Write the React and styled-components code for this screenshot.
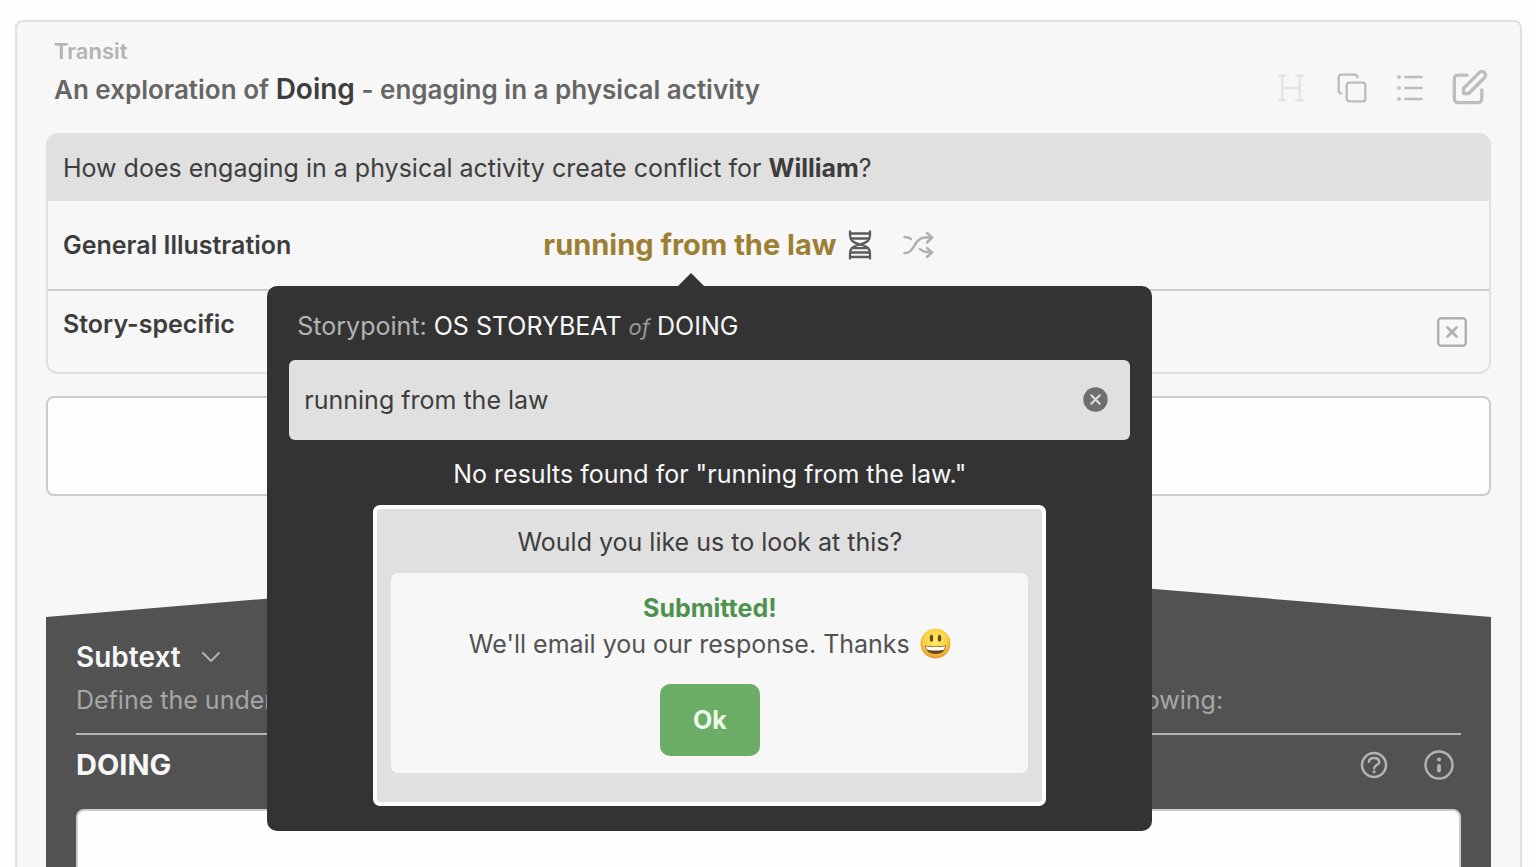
import { useState } from "react";
import styled, { createGlobalStyle, css } from "styled-components";
import { Copy, ChevronDown } from "lucide-react";
import { TbHeading } from "react-icons/tb";
import { HiOutlinePencilAlt } from "react-icons/hi";

const ListIcon = () => (
  <svg width="31" height="26" viewBox="-5 0 31 26" aria-hidden="true">
    <g stroke="currentColor" strokeWidth="2.6" strokeLinecap="round">
      <path d="M8.5 2h16M8.5 13h16M8.5 24h16" />
      <path d="M1.8 2h.4M1.8 13h.4M1.8 24h.4" strokeWidth="3.4" />
    </g>
  </svg>
);

const HourglassIcon = () => (
  <svg width="24" height="30" viewBox="0 0 24 30" fill="none" aria-hidden="true">
    <g stroke="currentColor" strokeWidth="2.3" strokeLinecap="round">
      <path d="M2 1.500V5C2 10 4.500 12.500 12 14.500C20 16.500 22 18.500 22 24V28.500" />
      <path d="M22 1.500V5C22 10 19.500 12.500 12 14.500C4 16.500 2 18.500 2 24V28.500" />
      <path d="M2.500 3.500h19M3 8.500h18M5 18.200h14M2.500 22.500h19M2.500 27h19" />
    </g>
  </svg>
);

const ShuffleIcon = () => (
  <svg width="32" height="28" viewBox="0 0 32 28" fill="none" aria-hidden="true">
    <g
      stroke="currentColor"
      strokeWidth="2.5"
      strokeLinecap="round"
      strokeLinejoin="round"
    >
      <path d="M2.500 22C13 23 11 6.500 24 6.500H30" />
      <path d="M25 2L30 6.500L25 11.500" />
      <path d="M2.500 6C5 6 7 6.500 9 8" />
      <path d="M18 18C20 20.500 22.500 21.500 30 21.500" />
      <path d="M25 17L30 21.500L25 26" />
    </g>
  </svg>
);

const BoxCloseIcon = () => (
  <svg width="30" height="30" viewBox="0 0 30 30" fill="none" aria-hidden="true">
    <g stroke="currentColor" strokeWidth="2.400" strokeLinecap="round">
      <rect x="1.200" y="1.200" width="27.600" height="27.600" rx="3" />
      <path d="M10.500 10.500l9 9M19.500 10.500l-9 9" strokeWidth="2.800" />
    </g>
  </svg>
);

const ClearIcon = () => (
  <svg width="25" height="25" viewBox="0 0 25 25" fill="none" aria-hidden="true">
    <circle cx="12.500" cy="12.500" r="12.200" fill="#6f6f6f" />
    <path
      d="M8.300 8.300l8.400 8.400M16.700 8.300l-8.400 8.400"
      stroke="#e0e0e0"
      strokeWidth="2"
      strokeLinecap="round"
    />
  </svg>
);

const QuestionIcon = () => (
  <svg width="28" height="28" viewBox="0 0 28 28" fill="none" aria-hidden="true">
    <circle cx="14" cy="14" r="12" stroke="currentColor" strokeWidth="2.500" />
    <path
      d="M8.800 10.800C9.300 5.700 19 5.700 19.200 11C19.200 14.300 14.100 14.200 14.100 17.200"
      stroke="currentColor"
      strokeWidth="2.500"
      strokeLinecap="round"
    />
    <circle cx="14.100" cy="20.800" r="1.600" fill="currentColor" />
  </svg>
);

const InfoIcon = () => (
  <svg width="30" height="30" viewBox="0 0 30 30" fill="none" aria-hidden="true">
    <circle cx="15" cy="15" r="13.500" stroke="currentColor" strokeWidth="2.400" />
    <circle cx="15" cy="9.500" r="2" fill="currentColor" />
    <path d="M15 16v4.500" stroke="currentColor" strokeWidth="3.800" strokeLinecap="round" />
  </svg>
);

const SmileIcon = () => (
  <svg width="31" height="31" viewBox="0 0 31 31" role="img" aria-label="smile">
    <defs>
      <radialGradient id="face" cx="0.5" cy="0.4" r="0.62">
        <stop offset="0" stopColor="#fff06a" />
        <stop offset="0.65" stopColor="#fbcd45" />
        <stop offset="1" stopColor="#dd8c28" />
      </radialGradient>
    </defs>
    <circle cx="15.500" cy="15.500" r="15" fill="url(#face)" />
    <ellipse cx="11.500" cy="10.300" rx="1.700" ry="3.500" fill="#67451b" />
    <ellipse cx="19.500" cy="10.300" rx="1.700" ry="3.500" fill="#67451b" />
    <path d="M5 17.500Q15.500 19.500 26 17.500Q25 26 15.500 26Q6 26 5 17.500Z" fill="#6b4417" />
    <path d="M6 18.200Q15.500 20 25 18.200Q25 21.500 22.500 22Q15.500 23 8.500 22Q6 21.500 6 18.200Z" fill="#fff" />
  </svg>
);

const App = () => {
  const [search, setSearch] = useState("running from the law");

  return (
    <Page>
      <GlobalStyle />
      <Card>
        <CardHeader>
          <div>
            <Eyebrow>Transit</Eyebrow>
            <Title>
              An exploration of <strong>Doing</strong> - engaging in a physical
              activity
            </Title>
          </div>
          <Toolbar>
            <IconButton aria-label="Heading" $color="#e4e4e4">
              <TbHeading size={42} strokeWidth={1.3} />
            </IconButton>
            <IconButton aria-label="Copy" $color="#bdbdbd">
              <Copy size={32} strokeWidth={1.8} />
            </IconButton>
            <IconButton aria-label="List" $color="#bdbdbd">
              <ListIcon />
            </IconButton>
            <EditButton aria-label="Edit" $color="#bdbdbd">
              <HiOutlinePencilAlt size={44} />
            </EditButton>
          </Toolbar>
        </CardHeader>

        <Beat>
          <Question>
            How does engaging in a physical activity create conflict for{" "}
            <strong>William</strong>?
          </Question>
          <Row>
            <RowLabel>General Illustration</RowLabel>
            <RowContent>
              <Anchor>
                <IllustrationLink href="#illustration">
                  running from the law
                </IllustrationLink>
                <Popover role="dialog" aria-label="Storypoint">
                  <StoryLabel htmlFor="search">
                    Storypoint: <b>OS STORYBEAT</b> <i>of</i> <b>DOING</b>
                  </StoryLabel>
                  <SearchBox>
                    <SearchInput
                      id="search"
                      type="text"
                      value={search}
                      onChange={(e) => setSearch(e.target.value)}
                    />
                    <IconButton aria-label="Clear" onClick={() => setSearch("")}>
                      <ClearIcon />
                    </IconButton>
                  </SearchBox>
                  <NoResults>
                    No results found for "running from the law."
                  </NoResults>
                  <Request>
                    <p>Would you like us to look at this?</p>
                    <Confirmation>
                      <Submitted>Submitted!</Submitted>
                      <Thanks>
                        We'll email you our response. Thanks <SmileIcon />
                      </Thanks>
                      <OkButton type="button">Ok</OkButton>
                    </Confirmation>
                  </Request>
                </Popover>
              </Anchor>
              <IconButton aria-label="Pending" $color="#5c5c5c">
                <HourglassIcon />
              </IconButton>
              <ShuffleButton aria-label="Shuffle" $color="#b0b0b0">
                <ShuffleIcon />
              </ShuffleButton>
            </RowContent>
          </Row>
          <Row $divided>
            <RowLabel>Story-specific</RowLabel>
            <RowContent $end>
              <IconButton aria-label="Remove" $color="#b0b0b0">
                <BoxCloseIcon />
              </IconButton>
            </RowContent>
          </Row>
        </Beat>

        <Notes aria-label="Illustration" />

        <Subtext>
          <SubtextTitle>
            Subtext <ChevronDown size={32} strokeWidth={1.5} />
          </SubtextTitle>
          <SubtextHint>
            Define the underlying conflict for this Storybeat and explain what
            it means by using the following:
          </SubtextHint>
          <SubtextBar>
            <label htmlFor="doing">DOING</label>
            <SubtextActions>
              <IconButton aria-label="Help" $color="#b3b3b3">
                <QuestionIcon />
              </IconButton>
              <IconButton aria-label="Info" $color="#b3b3b3">
                <InfoIcon />
              </IconButton>
            </SubtextActions>
          </SubtextBar>
          <SubtextArea id="doing" />
        </Subtext>
      </Card>
    </Page>
  );
};

// styled components
const GlobalStyle = createGlobalStyle`
  * {
    box-sizing: border-box;
  }
  body {
    margin: 0;
    background: #fefefe;
    color: #3d3d3d;
    font-family: Inter, "Liberation Sans", sans-serif;
    font-size: 25px;
    line-height: 36px;
  }
  p, h1, h2 {
    margin: 0;
  }
  strong {
    font-weight: 700;
  }
`;

const Page = styled.main`
  height: 100vh;
  overflow: hidden;
  padding: 20px 14px 0 15px;
`;

const Card = styled.section`
  padding: 13px 29px 0;
  background: #f7f7f7;
  border: 2px solid #e0e0e0;
  border-radius: 8px;
`;

const CardHeader = styled.header`
  display: flex;
  justify-content: space-between;
  align-items: flex-end;
  padding: 0 0 21px 8px;
`;

const Eyebrow = styled.p`
  color: #b3b3b3;
  font-size: 22px;
  font-weight: 600;
  line-height: 32px;
`;

const Title = styled.h1`
  color: #666;
  font-size: 26px;
  font-weight: 600;
  line-height: 44px;
  & strong {
    color: #3d3d3d;
    font-size: 28px;
    font-weight: 600;
  }
`;

const Toolbar = styled.div`
  display: flex;
  align-items: center;
  gap: 24px;
  padding-bottom: 2px;
`;

const IconButton = styled.button`
  display: flex;
  padding: 0;
  border: 0;
  background: none;
  color: ${(props) => props.$color};
  cursor: pointer;
`;

const EditButton = styled(IconButton)`
  & path {
    stroke-width: 1.8;
  }
`;

const Beat = styled.section`
  border: 2px solid #e0e0e0;
  border-radius: 12px;
`;

const Question = styled.h2`
  padding: 15px;
  background: #e0e0e0;
  border-radius: 8px 8px 0 0;
  font-size: 25px;
  font-weight: 400;
`;

const Row = styled.div`
  display: grid;
  grid-template-columns: 1fr 2fr;
  align-items: center;
  height: 88px;
  ${(props) =>
    props.$divided &&
    css`
      align-items: stretch;
      height: 83px;
      padding-top: 15px;
      border-top: 2px solid #ccc;
    `}
`;

const RowLabel = styled.div`
  padding: 0 15px;
  font-weight: 600;
`;

const RowContent = styled.div`
  display: flex;
  align-items: center;
  gap: 12px;
  padding: 0 15px;
  ${(props) =>
    props.$end &&
    css`
      justify-content: flex-end;
      padding: 0 22px 15px;
    `}
`;

const ShuffleButton = styled(IconButton)`
  margin-left: 18px;
`;

const Anchor = styled.div`
  position: relative;
`;

const IllustrationLink = styled.a`
  color: #9c7f33;
  font-size: 29px;
  font-weight: 700;
  text-decoration: none;
`;

const Popover = styled.div`
  position: absolute;
  z-index: 2;
  top: 59px;
  left: -276px;
  width: 885px;
  padding: 22px 22px 25px;
  background: #333;
  border-radius: 10px;
  color: #f7f7f7;
  &::before {
    content: "";
    position: absolute;
    top: -13px;
    left: 411px;
    border: 13px solid transparent;
    border-top: 0;
    border-bottom-color: #333;
  }
`;

const StoryLabel = styled.label`
  display: block;
  padding: 0 8px 15px;
  color: #b3b3b3;
  & b {
    color: #f7f7f7;
    font-weight: 400;
  }
  & i {
    color: #999;
    font-size: 22px;
  }
`;

const SearchBox = styled.div`
  display: flex;
  align-items: center;
  padding: 0 22px 0 15px;
  background: #e0e0e0;
  border-radius: 6px;
`;

const SearchInput = styled.input`
  flex: 1;
  height: 80px;
  padding: 0;
  border: 0;
  outline: 0;
  background: none;
  color: #3d3d3d;
  font: inherit;
`;

const NoResults = styled.p`
  padding: 16px 0 13px;
  text-align: center;
`;

const Request = styled.div`
  width: 80%;
  margin: 0 auto;
  padding: 15px 14px 29px;
  background: #e0e0e0;
  border: 4px solid #fdfdfd;
  border-radius: 7px;
  color: #3d3d3d;
  text-align: center;
`;

const Confirmation = styled.div`
  margin-top: 13px;
  padding: 17px;
  background: #f7f7f7;
  border-radius: 7px;
`;

const Submitted = styled.p`
  color: #4f924f;
  font-weight: 700;
`;

const Thanks = styled.p`
  display: flex;
  justify-content: center;
  align-items: center;
  gap: 10px;
  color: #525252;
`;

const OkButton = styled.button`
  margin-top: 22px;
  padding: 18px 33px;
  border: 0;
  border-radius: 10px;
  background: #6bac66;
  color: #e9fbe7;
  font: inherit;
  font-weight: 700;
  vertical-align: top;
  cursor: pointer;
`;

const Notes = styled.textarea`
  display: block;
  width: 100%;
  height: 100px;
  margin: 22px 0 61px;
  border: 2px solid #ccc;
  border-radius: 8px;
  background: #fefefe;
  resize: none;
`;

const Subtext = styled.section`
  padding: 82px 30px 30px;
  background: #525252;
  clip-path: polygon(0 60px, 50% 0, 100% 60px, 100% 100%, 0 100%);
`;

const SubtextTitle = styled.h2`
  display: flex;
  align-items: center;
  gap: 14px;
  color: #f7f7f7;
  font-size: 28px;
  font-weight: 600;
  & svg {
    color: #b3b3b3;
  }
`;

const SubtextHint = styled.p`
  padding: 7px 0 15px;
  border-bottom: 2px solid #b3b3b3;
  color: #a6a6a6;
  white-space: nowrap;
`;

const SubtextBar = styled.div`
  display: flex;
  justify-content: space-between;
  align-items: center;
  height: 60px;
  padding-right: 7px;
  color: #f7f7f7;
  font-size: 29px;
  font-weight: 700;
`;

const SubtextActions = styled.div`
  display: flex;
  align-items: center;
  gap: 36px;
`;

const SubtextArea = styled.textarea`
  display: block;
  width: 100%;
  height: 180px;
  margin-top: 14px;
  border: 2px solid #ccc;
  border-radius: 8px;
  background: #fefefe;
  resize: none;
`;

export default App;
